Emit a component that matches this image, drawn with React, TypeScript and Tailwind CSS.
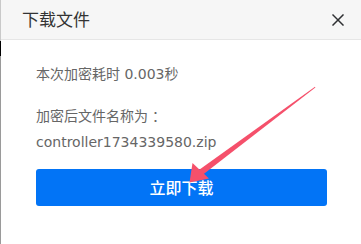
import React from "react";

const font = { fontFamily: '"Noto Sans", "Noto Sans CJK SC", sans-serif' };
const bodyFont = { fontFamily: '"DejaVu Sans", "Noto Sans CJK SC", sans-serif' };

function CloseIcon() {
  return (
    <svg width="12" height="12" viewBox="0 0 12 12" fill="none" stroke="#2f3033" strokeWidth="1.5" strokeLinecap="square">
      <line x1="1" y1="1" x2="11" y2="11" />
      <line x1="11" y1="1" x2="1" y2="11" />
    </svg>
  );
}

// red annotation arrow drawn over the dialog
function RedArrow() {
  return (
    <svg className="absolute left-0 top-0 pointer-events-none" width="361" height="244" viewBox="0 0 361 244">
      <polygon points="201.8,175.4 198.2,170.4 315,86.8 315.4,87.4" fill="#f5506b" />
      <polygon points="189.5,182.5 192.5,163 209,178.5" fill="#f5506b" />
    </svg>
  );
}

export default function App() {
  return (
    <div className="relative w-[361px] h-[244px] bg-white flex overflow-hidden" style={font}>
      {/* window edge */}
      <div className="w-px flex flex-col shrink-0">
        <div className="h-[41px] bg-[#c9c9c9]" />
        <div className="h-[15px] bg-black" />
        <div className="flex-1 bg-[#9a9a9a]" />
      </div>

      <div className="flex-1 flex flex-col">
        <div className="h-[40px] bg-[#f6f6f6] border-b border-[#e6e6e6] flex items-center justify-between pl-[21px] pr-[17px]">
          <span className="text-[17px] text-[#333]">下载文件</span>
          <CloseIcon />
        </div>

        <div className="pl-[35px] pr-[34px] pt-[23px] text-[14px] text-[#666]" style={bodyFont}>
          <div className="leading-[22px]">本次加密耗时 0.003秒</div>
          <div className="leading-[22px] mt-[20px]">
            加密后文件名称为<span className="ml-[4px]">：</span>
          </div>
          <div className="leading-[22px] mt-[4px]">controller1734339580.zip</div>
          <button className="mt-[16px] w-full h-[37px] rounded-[3px] bg-[#0274f6] text-white text-[16px] font-medium flex items-center justify-center" style={font}>
            立即下载
          </button>
        </div>
      </div>

      <RedArrow />
    </div>
  );
}
